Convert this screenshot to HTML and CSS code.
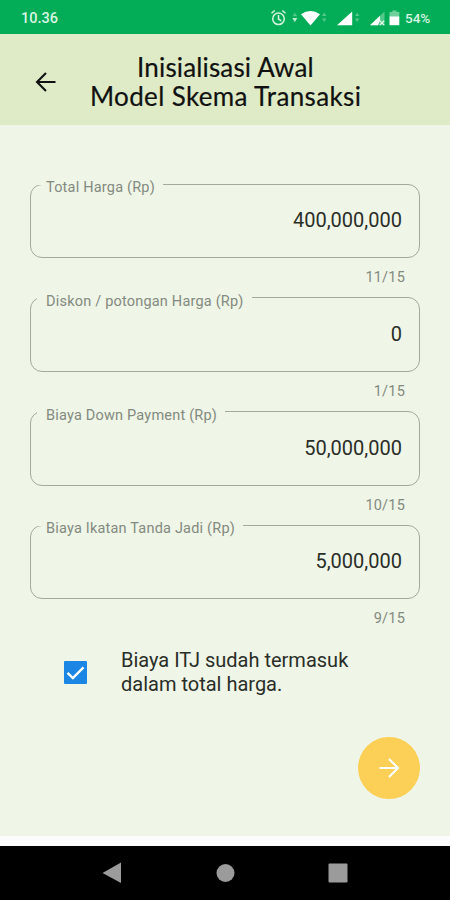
FILE: index.html
```html
<!DOCTYPE html>
<html lang="id">
<head>
    <meta charset="UTF-8">
    <meta name="viewport" content="width=device-width, initial-scale=1.0">
    <title>Inisialisasi Awal</title>
    <link rel="stylesheet" href="styles.css">
</head>
<body>
    <div class="status-bar">
        <span class="clock">10.36</span>
        <svg class="status-icons" width="130" height="20" viewBox="0 0 130 20">
            <!-- alarm -->
            <g fill="none" stroke="#d5f3df" stroke-width="1.5">
                <circle cx="8.5" cy="10.8" r="5.8"/>
                <path d="M8.5 7v4l2.8 1.8M1.5 5.3l3.2-2.8M15.5 5.3l-3.2-2.8"/>
            </g>
            <!-- wifi -->
            <path d="M22.3 10h5l-2.5 4z" fill="#c4efd2"/>
            <path d="M22.5 8.2h4.6l-2.3-3.4z" fill="#55c88a"/>
            <path d="M31 6.2Q40.5 0 50 6.2L40.5 17.5z" fill="#fff"/>
            <path d="M52 8h4.4l-2.2-3.6zM52 10.5h4.4l-2.2 3.6z" fill="#55c88a"/>
            <!-- signal -->
            <path d="M67 17.2L82.2 3.5v13.7z" fill="#fff"/>
            <path d="M85 8h4.4l-2.2-3.6zM85 10.5h4.4l-2.2 3.6z" fill="#55c88a"/>
            <path d="M100 17.2L114.5 3.5v13.7z" fill="#55c88a"/>
            <path d="M100 17.2L110 7.8v4.4l-2 5z" fill="#fff"/>
            <path d="M109.8 12.7l4.4 4.4M114.2 12.7l-4.4 4.4" stroke="#e2f7e9" stroke-width="1.3"/>
            <!-- battery -->
            <path d="M119.5 4h3V2.5h4V4h2.8v5h-9.8z" fill="#70d09b"/>
            <path d="M119.5 8.5h9.8v8.7h-9.8z" fill="#fff"/>
        </svg>
        <span class="battery">54%</span>
    </div>

    <div class="header">
        <svg class="back" width="22" height="22" viewBox="0 0 22 22">
            <path d="M20.5 11H2.5M11 2L2 11l9 9" fill="none" stroke="#111" stroke-width="2.1"/>
        </svg>
        <h1><span class="line1">Inisialisasi Awal</span><span class="line2">Model Skema Transaksi</span></h1>
    </div>

    <div class="content">
        <div class="field">
            <fieldset>
                <legend>Total Harga (Rp)</legend>
                <div class="value">400,000,000</div>
            </fieldset>
            <div class="counter">11/15</div>
        </div>
        <div class="field">
            <fieldset>
                <legend>Diskon / potongan Harga (Rp)</legend>
                <div class="value">0</div>
            </fieldset>
            <div class="counter">1/15</div>
        </div>
        <div class="field">
            <fieldset>
                <legend>Biaya Down Payment (Rp)</legend>
                <div class="value">50,000,000</div>
            </fieldset>
            <div class="counter">10/15</div>
        </div>
        <div class="field">
            <fieldset>
                <legend>Biaya Ikatan Tanda Jadi (Rp)</legend>
                <div class="value">5,000,000</div>
            </fieldset>
            <div class="counter">9/15</div>
        </div>

        <div class="check-row">
            <svg class="checkbox" width="23" height="23" viewBox="0 0 23 23">
                <rect width="23" height="23" rx="1" fill="#1b86e3"/>
                <path d="M3.5 11.8l5.4 5.2L19.5 6.3" fill="none" stroke="#fff" stroke-width="2.4"/>
            </svg>
            <div class="check-text">Biaya ITJ sudah termasuk<br>dalam total harga.</div>
        </div>

        <div class="next">
            <svg width="22" height="22" viewBox="0 0 22 22">
                <path d="M1.5 11h18M11 2l9 9-9 9" fill="none" stroke="#fff" stroke-width="2.2"/>
            </svg>
        </div>
    </div>

    <div class="nav-bar">
        <svg width="450" height="54" viewBox="0 0 450 54">
            <g fill="#9b9b9b">
                <path d="M102.5 27L121 16.5v20.5z"/>
                <circle cx="225.5" cy="27" r="9"/>
                <rect x="328.5" y="17.5" width="19" height="19" rx="1"/>
            </g>
        </svg>
    </div>
</body>
</html>
```
FILE: styles.css
```css
* {
    box-sizing: border-box;
}
body {
    margin: 0;
    width: 450px;
    height: 900px;
    display: flex;
    flex-direction: column;
    background-color: #fbfcfb;
    font-family: Roboto, sans-serif;
    overflow: hidden;
}
.status-bar {
    height: 34px;
    background-color: #03ad58;
    display: flex;
    align-items: center;
    padding: 2px 19px 0 21px;
    color: #d9f5e3;
    font-size: 14.5px;
    font-weight: 500;
}
.clock {
    flex: 1;
}
.status-icons {
    margin-right: 5px;
}
.battery {
    width: 26px;
    font-size: 13.5px;
    white-space: nowrap;
}
.header {
    height: 91px;
    background-color: #deebc6;
    display: flex;
    align-items: center;
    padding: 4px 0 0 35px;
}
.header h1 {
    margin: 0 0 0 33px;
    width: 271px;
    font-family: Lato, sans-serif;
    font-size: 26px;
    font-weight: 400;
    line-height: 29px;
    color: #111;
    text-align: center;
    -webkit-text-stroke: 0.2px #111;
}
.header h1 span {
    display: block;
    white-space: nowrap;
}
.line1 {
    letter-spacing: 0.15px;
}
.line2 {
    letter-spacing: 0.35px;
}
.content {
    height: 711px;
    background-color: #eff5e7;
    padding: 58px 30px 0;
}
.field {
    height: 113.8px;
}
fieldset {
    margin: 0;
    height: 75px;
    min-width: 0;
    border: 1px solid #a3ab9b;
    border-radius: 12px;
    padding: 0 17px 0 6px;
}
legend {
    height: 2px;
    line-height: 10px;
    padding: 0 8px 0 9px;
    font-size: 14.5px;
    letter-spacing: 0.2px;
    color: #838a7f;
    white-space: nowrap;
}
.value {
    padding-top: 23px;
    text-align: right;
    font-size: 20px;
    line-height: 24px;
    color: #2a2e28;
}
.counter {
    margin-top: 10px;
    padding-right: 15px;
    text-align: right;
    font-size: 14.5px;
    line-height: 20px;
    letter-spacing: 0.2px;
    color: #838a7f;
}
.check-row {
    display: flex;
    align-items: center;
    padding-left: 34px;
    margin-top: 10px;
}
.check-text {
    margin-left: 34px;
    font-size: 20px;
    line-height: 24px;
    color: #2a2e28;
}
.next {
    width: 62px;
    height: 62px;
    margin: 41px 0 0 auto;
    border-radius: 50%;
    background-color: #fcd057;
    display: flex;
    align-items: center;
    justify-content: center;
}
.nav-bar {
    height: 54px;
    margin-top: auto;
    background-color: #000;
}
```
